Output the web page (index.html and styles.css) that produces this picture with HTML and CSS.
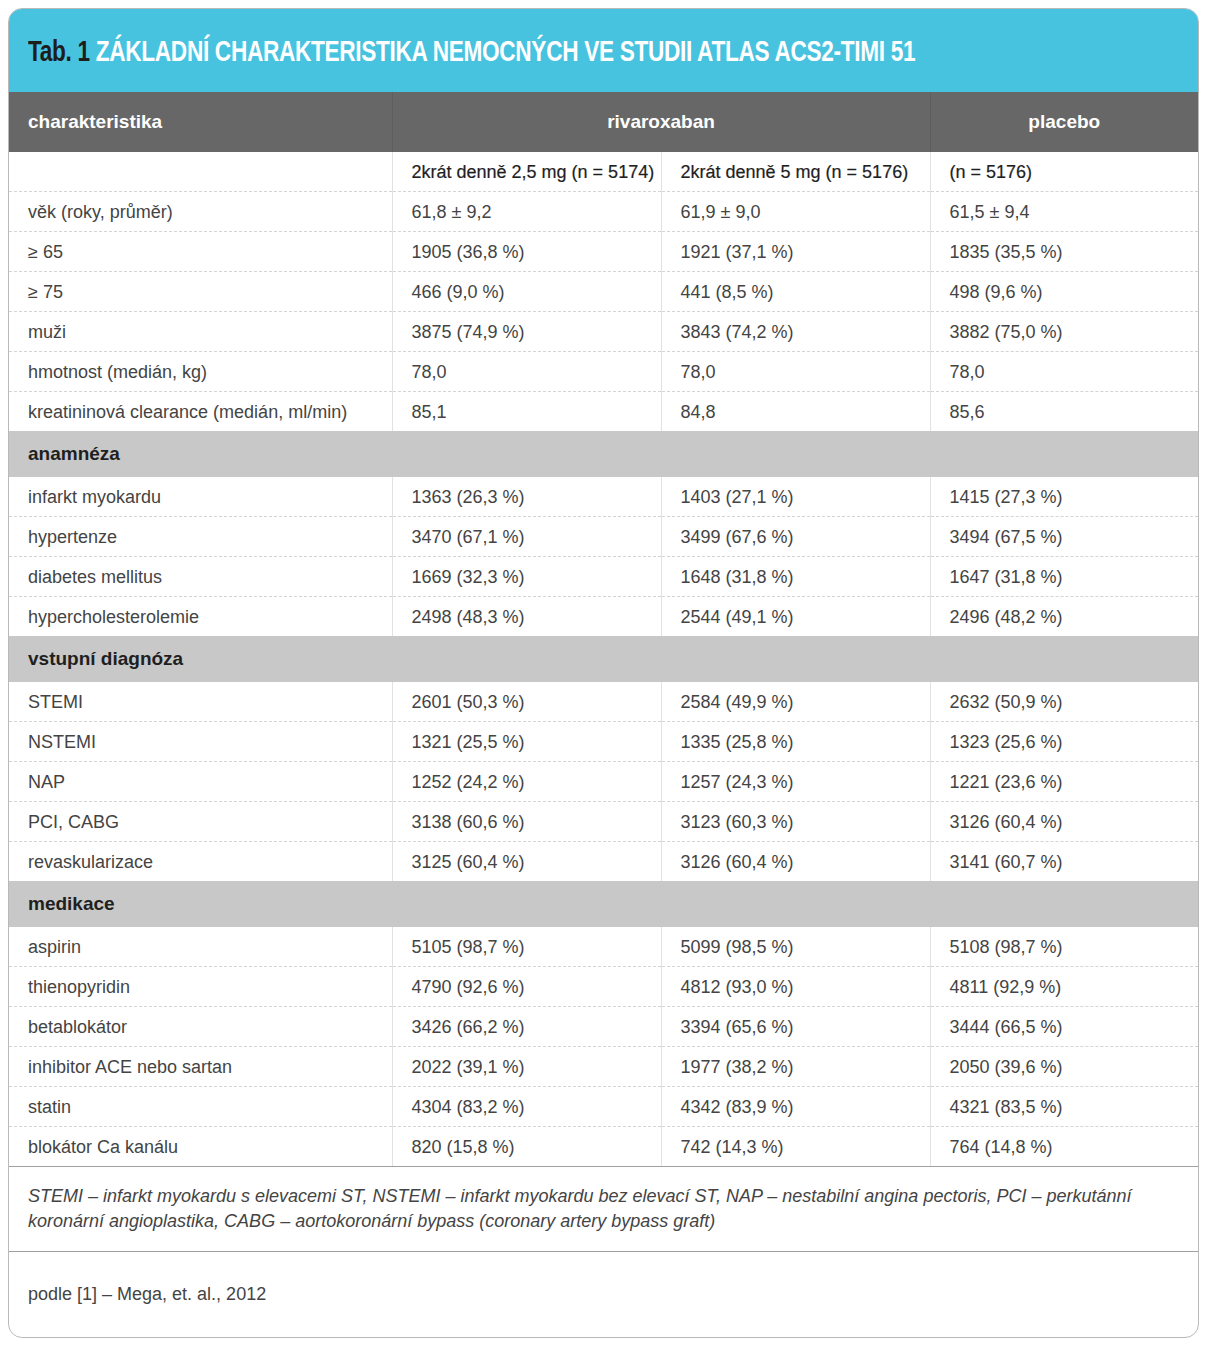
FILE: index.html
```html
<!DOCTYPE html>
<html lang="cs">
<head>
<meta charset="utf-8">
<title>Tab. 1</title>
<link rel="stylesheet" href="styles.css">
</head>
<body>
<div class="card">
  <div class="title"><span class="title-text"><span class="tab">Tab. 1</span> ZÁKLADNÍ CHARAKTERISTIKA NEMOCNÝCH VE STUDII ATLAS ACS2-TIMI 51</span></div>
  <table class="data">
    <colgroup><col class="c1"><col class="c2"><col class="c3"><col class="c4"></colgroup>
    <thead>
      <tr class="head">
        <th class="left">charakteristika</th>
        <th colspan="2">rivaroxaban</th>
        <th>placebo</th>
      </tr>
    </thead>
    <tbody>
      <tr class="sub"><td></td><td>2krát denně 2,5 mg (n = 5174)</td><td>2krát denně 5 mg (n = 5176)</td><td>(n = 5176)</td></tr>
      <tr><td>věk (roky, průměr)</td><td>61,8 ± 9,2</td><td>61,9 ± 9,0</td><td>61,5 ± 9,4</td></tr>
      <tr><td>≥ 65</td><td>1905 (36,8 %)</td><td>1921 (37,1 %)</td><td>1835 (35,5 %)</td></tr>
      <tr><td>≥ 75</td><td>466 (9,0 %)</td><td>441 (8,5 %)</td><td>498 (9,6 %)</td></tr>
      <tr><td>muži</td><td>3875 (74,9 %)</td><td>3843 (74,2 %)</td><td>3882 (75,0 %)</td></tr>
      <tr><td>hmotnost (medián, kg)</td><td>78,0</td><td>78,0</td><td>78,0</td></tr>
      <tr class="last"><td>kreatininová clearance (medián, ml/min)</td><td>85,1</td><td>84,8</td><td>85,6</td></tr>
      <tr class="section"><td colspan="4">anamnéza</td></tr>
      <tr><td>infarkt myokardu</td><td>1363 (26,3 %)</td><td>1403 (27,1 %)</td><td>1415 (27,3 %)</td></tr>
      <tr><td>hypertenze</td><td>3470 (67,1 %)</td><td>3499 (67,6 %)</td><td>3494 (67,5 %)</td></tr>
      <tr><td>diabetes mellitus</td><td>1669 (32,3 %)</td><td>1648 (31,8 %)</td><td>1647 (31,8 %)</td></tr>
      <tr class="last"><td>hypercholesterolemie</td><td>2498 (48,3 %)</td><td>2544 (49,1 %)</td><td>2496 (48,2 %)</td></tr>
      <tr class="section"><td colspan="4">vstupní diagnóza</td></tr>
      <tr><td>STEMI</td><td>2601 (50,3 %)</td><td>2584 (49,9 %)</td><td>2632 (50,9 %)</td></tr>
      <tr><td>NSTEMI</td><td>1321 (25,5 %)</td><td>1335 (25,8 %)</td><td>1323 (25,6 %)</td></tr>
      <tr><td>NAP</td><td>1252 (24,2 %)</td><td>1257 (24,3 %)</td><td>1221 (23,6 %)</td></tr>
      <tr><td>PCI, CABG</td><td>3138 (60,6 %)</td><td>3123 (60,3 %)</td><td>3126 (60,4 %)</td></tr>
      <tr class="last"><td>revaskularizace</td><td>3125 (60,4 %)</td><td>3126 (60,4 %)</td><td>3141 (60,7 %)</td></tr>
      <tr class="section"><td colspan="4">medikace</td></tr>
      <tr><td>aspirin</td><td>5105 (98,7 %)</td><td>5099 (98,5 %)</td><td>5108 (98,7 %)</td></tr>
      <tr><td>thienopyridin</td><td>4790 (92,6 %)</td><td>4812 (93,0 %)</td><td>4811 (92,9 %)</td></tr>
      <tr><td>betablokátor</td><td>3426 (66,2 %)</td><td>3394 (65,6 %)</td><td>3444 (66,5 %)</td></tr>
      <tr><td>inhibitor ACE nebo sartan</td><td>2022 (39,1 %)</td><td>1977 (38,2 %)</td><td>2050 (39,6 %)</td></tr>
      <tr><td>statin</td><td>4304 (83,2 %)</td><td>4342 (83,9 %)</td><td>4321 (83,5 %)</td></tr>
      <tr class="last"><td>blokátor Ca kanálu</td><td>820 (15,8 %)</td><td>742 (14,3 %)</td><td>764 (14,8 %)</td></tr>
    </tbody>
  </table>
  <p class="note">STEMI – infarkt myokardu s elevacemi ST, NSTEMI – infarkt myokardu bez elevací ST, NAP – nestabilní angina pectoris, PCI – perkutánní koronární angioplastika, CABG – aortokoronární bypass (coronary artery bypass graft)</p>
  <p class="source">podle [1] – Mega, et. al., 2012</p>
</div>
</body>
</html>
```

FILE: styles.css
```css
html, body {
  margin: 0;
  padding: 0;
  background: #ffffff;
}

body {
  padding: 8px 0 0 8px;
  font-family: "Liberation Sans", Arial, sans-serif;
  color: #444444;
}

.card {
  width: 1189px;
  border: 1px solid #b9b9b9;
  border-radius: 14px;
  overflow: hidden;
  background: #fff;
}

.title {
  background: #48c3df;
  height: 83px;
  display: flex;
  align-items: center;
  padding-left: 19px;
  overflow: hidden;
}

.title-text {
  display: inline-block;
  font-family: "Liberation Sans", sans-serif;
  font-weight: bold;
  font-size: 29px;
  color: #ffffff;
  white-space: nowrap;
  letter-spacing: -0.4px;
  transform: scaleX(0.78);
  transform-origin: left center;
  margin-top: 2px;
}

.tab {
  color: #1d1d1b;
}

.data {
  width: 100%;
  border-collapse: collapse;
  table-layout: fixed;
  font-size: 18px;
}

.c1 { width: 383px; }
.c2 { width: 269px; }
.c3 { width: 269px; }
.c4 { width: 268px; }

.data th,
.data td {
  padding: 0 19px;
  text-align: left;
  white-space: nowrap;
  overflow: hidden;
}

.head th {
  background: #676767;
  color: #ffffff;
  height: 60px;
  font-weight: bold;
  text-align: center;
  border-left: 1px solid #5e5e5e;
  font-size: 19px;
}

.head th.left {
  text-align: left;
  border-left: none;
}

.data tbody td {
  height: 37px;
  padding-top: 2px;
  border-bottom: 1px dashed #d4d4d4;
  border-left: 1px solid #e2e2e2;
}

.data tbody td:first-child {
  border-left: none;
}

.data tbody tr.last td {
  border-bottom: none;
}

.data tbody tr.sub td {
  color: #1f1f1f;
  -webkit-text-stroke: 0.2px #1f1f1f;
}

.data tbody tr.section td {
  background: #c8c8c8;
  color: #1f1f1f;
  font-weight: bold;
  font-size: 19px;
  height: 46px;
  padding-top: 0;
  border-bottom: none;
}

.note {
  margin: 0;
  border-top: 1px solid #a0a0a0;
  border-bottom: 1px solid #a0a0a0;
  padding: 17px 19px 17px 19px;
  font-style: italic;
  font-size: 18px;
  line-height: 25px;
  color: #444444;
}

.source {
  margin: 0;
  height: 85px;
  display: flex;
  align-items: center;
  padding: 0 19px;
  font-size: 18px;
  color: #444444;
}
```
